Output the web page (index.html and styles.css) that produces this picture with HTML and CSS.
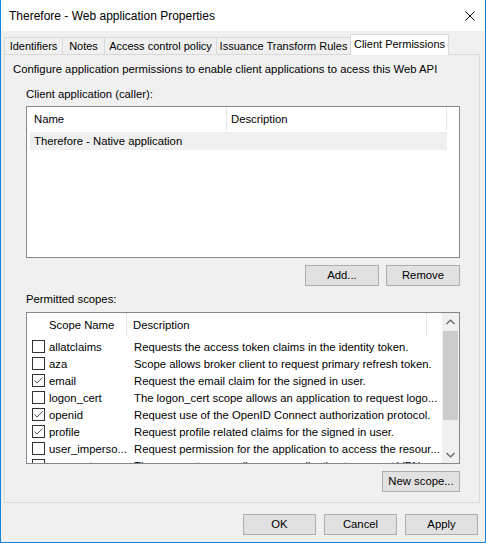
FILE: index.html
```html
<!DOCTYPE html>
<html>
<head>
<meta charset="utf-8">
<link rel="stylesheet" href="styles.css">
</head>
<body>
<div class="window">
  <div class="titlebar">
    <span class="title">Therefore - Web application Properties</span>
    <svg class="close" width="10" height="10" viewBox="0 0 10 10"><path d="M0.5 0.5L9.5 9.5M9.5 0.5L0.5 9.5" stroke="#000" stroke-width="1" fill="none"/></svg>
  </div>
  <div class="body">
    <div class="tabs">
      <div class="tab t1">Identifiers</div>
      <div class="tab t2">Notes</div>
      <div class="tab t3">Access control policy</div>
      <div class="tab t4">Issuance Transform Rules</div>
      <div class="tab active">Client Permissions</div>
    </div>
    <div class="panel">
      <div class="intro">Configure application permissions to enable client applications to acess this Web API</div>
      <div class="group">
        <div class="label">Client application (caller):</div>
        <div class="listbox clients">
          <div class="lv-header">
            <div class="hcell c-name">Name</div>
            <div class="hcell c-desc">Description</div>
          </div>
          <div class="lv-row selected">Therefore - Native application</div>
        </div>
        <div class="btnrow">
          <div class="btn">Add...</div>
          <div class="btn">Remove</div>
        </div>
        <div class="label scopes-label">Permitted scopes:</div>
        <div class="listbox scopes">
          <div class="scope-content">
            <div class="lv-header">
              <div class="hcell s-name">Scope Name</div>
              <div class="hcell s-desc">Description</div>
            </div>
            <div class="srow"><span class="cb"></span><span class="sname">allatclaims</span><span class="sdesc">Requests the access token claims in the identity token.</span></div>
            <div class="srow"><span class="cb"></span><span class="sname">aza</span><span class="sdesc">Scope allows broker client to request primary refresh token.</span></div>
            <div class="srow"><span class="cb"><svg width="11" height="11" viewBox="0 0 11 11"><path d="M1.5 5.5L4 8L9.5 2.5" stroke="#555" stroke-width="1" fill="none"/></svg></span><span class="sname">email</span><span class="sdesc">Request the email claim for the signed in user.</span></div>
            <div class="srow"><span class="cb"></span><span class="sname">logon_cert</span><span class="sdesc">The logon_cert scope allows an application to request logo...</span></div>
            <div class="srow"><span class="cb"><svg width="11" height="11" viewBox="0 0 11 11"><path d="M1.5 5.5L4 8L9.5 2.5" stroke="#555" stroke-width="1" fill="none"/></svg></span><span class="sname">openid</span><span class="sdesc">Request use of the OpenID Connect authorization protocol.</span></div>
            <div class="srow"><span class="cb"><svg width="11" height="11" viewBox="0 0 11 11"><path d="M1.5 5.5L4 8L9.5 2.5" stroke="#555" stroke-width="1" fill="none"/></svg></span><span class="sname">profile</span><span class="sdesc">Request profile related claims for the signed in user.</span></div>
            <div class="srow"><span class="cb"></span><span class="sname">user_imperso...</span><span class="sdesc">Request permission for the application to access the resour...</span></div>
            <div class="srow"><span class="cb"></span><span class="sname">vpn_cert</span><span class="sdesc">The vpn_cert scope allows an application to request VPN ...</span></div>
          </div>
          <div class="vscroll">
            <div class="arrow"><svg width="9" height="6" viewBox="0 0 9 6"><path d="M0.5 5L4.5 1L8.5 5" stroke="#606060" stroke-width="1.2" fill="none"/></svg></div>
            <div class="track"><div class="thumb"></div></div>
            <div class="arrow"><svg width="9" height="6" viewBox="0 0 9 6"><path d="M0.5 1L4.5 5L8.5 1" stroke="#606060" stroke-width="1.2" fill="none"/></svg></div>
          </div>
        </div>
        <div class="btnrow">
          <div class="btn wide">New scope...</div>
        </div>
      </div>
    </div>
    <div class="footer">
      <div class="btn">OK</div>
      <div class="btn">Cancel</div>
      <div class="btn">Apply</div>
    </div>
  </div>
</div>
</body>
</html>
```

FILE: styles.css
```css
* { box-sizing: border-box; }
html, body { margin: 0; padding: 0; }
body {
  font-family: "Liberation Sans", Arial, sans-serif;
  font-size: 11.3px;
  color: #000;
  background: #fff;
}
.window {
  width: 486px;
  height: 543px;
  border: 1px solid #1883d7;
  border-top: none;
  display: flex;
  flex-direction: column;
  background: #f0f0f0;
}
.titlebar {
  height: 31px;
  flex: none;
  background: #fff;
  display: flex;
  align-items: center;
  justify-content: space-between;
  padding: 0 10px 0 8px;
}
.title { font-size: 12px; }
.close { margin-top: 1px; }
.body {
  flex: 1;
  display: flex;
  flex-direction: column;
  padding: 3px 5px 0 3px;
}
.tabs {
  display: flex;
  align-items: flex-end;
  height: 20px;
  flex: none;
  position: relative;
  z-index: 2;
  white-space: nowrap;
  font-size: 11px;
}
.tab {
  height: 17px;
  line-height: 16px;
  border: 1px solid #d9d9d9;
  border-bottom: none;
  background: #f0f0f0;
  text-align: center;
  margin-right: -1px;
}
.t1 { width: 59px; }
.t2 { width: 43px; }
.t3 { width: 113px; }
.t4 { width: 135px; }
.tab.active {
  width: 99px;
  height: 21px;
  line-height: 18px;
  background: #fff;
  margin-bottom: -1px;
}
.panel {
  height: 449px;
  flex: none;
  border: 1px solid #d9d9d9;
  background: #f0f0f0;
  position: relative;
  z-index: 1;
  padding: 6px 0 0 8px;
}
.intro { height: 16px; line-height: 16px; white-space: nowrap; }
.group { padding-left: 13px; }
.label { height: 16px; line-height: 16px; margin-top: 9px; }
.listbox {
  width: 434px;
  border: 1px solid #828790;
  background: #fff;
}
.clients {
  height: 152px;
  margin-top: 4px;
  padding: 0 12px 0 3px;
}
.lv-header {
  display: flex;
  height: 25px;
  background: #fff;
}
.hcell {
  height: 23px;
  line-height: 25px;
  padding-left: 4px;
  border-right: 1px solid #e5e5e5;
}
.c-name { width: 197px; }
.c-desc { width: 220px; }
.lv-row {
  height: 18px;
  line-height: 18px;
  padding-left: 4px;
}
.lv-row.selected { background: #f0f0f0; }
.btnrow {
  width: 434px;
  display: flex;
  justify-content: flex-end;
  gap: 7px;
  margin-top: 7px;
}
.btn {
  width: 74px;
  height: 21px;
  border: 1px solid #adadad;
  background: #e1e1e1;
  text-align: center;
  line-height: 19px;
  white-space: nowrap;
}
.btn.wide { width: 78px; }
.scopes-label { margin-top: 5px; }
.scopes {
  height: 152px;
  margin-top: 5px;
  display: flex;
  overflow: hidden;
}
.scope-content {
  flex: 1;
  padding: 0 0 0 3px;
  overflow: hidden;
}
.s-name { width: 97px; padding-left: 19px; }
.s-desc { width: 300px; padding-left: 6px; }
.srow {
  display: flex;
  align-items: center;
  height: 17px;
  white-space: nowrap;
}
.cb {
  width: 13px;
  height: 13px;
  border: 1px solid #333;
  background: #fff;
  margin-left: 2px;
  margin-right: 4px;
  display: flex;
  align-items: center;
  justify-content: center;
  flex: none;
}
.cb svg { display: block; }
.sname { width: 85px; flex: none; }
.sdesc { padding-left: 0; }
.vscroll {
  width: 17px;
  flex: none;
  display: flex;
  flex-direction: column;
  background: #f0f0f0;
}
.arrow {
  height: 17px;
  display: flex;
  align-items: center;
  justify-content: center;
}
.track { flex: 1; }
.thumb {
  height: 89px;
  margin: 1px 1px 0 1px;
  background: #cdcdcd;
}
.footer {
  display: flex;
  justify-content: flex-end;
  gap: 8px;
  padding: 11px 2px 0 0;
}
.footer .btn { width: 73px; }
```
